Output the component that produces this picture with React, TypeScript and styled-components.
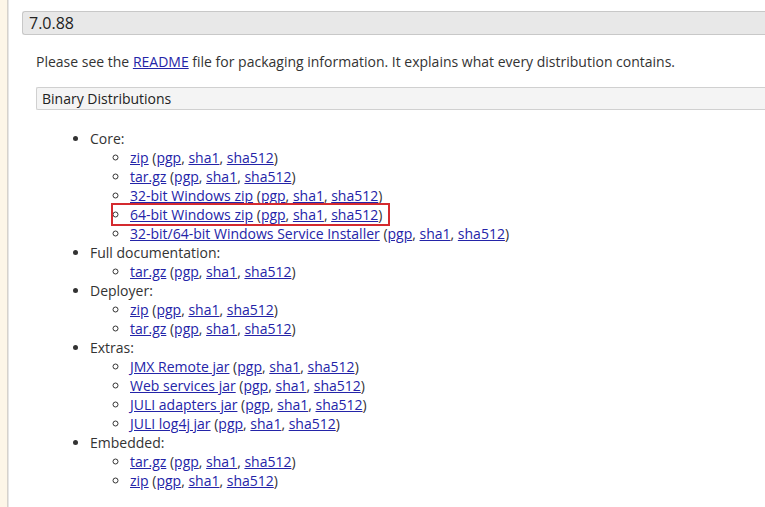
import React from "react";
import styled, { createGlobalStyle } from "styled-components";

const Global = createGlobalStyle`
  html, body { margin: 0; padding: 0; background: #fff; }
  body { font-family: "Open Sans", "DejaVu Sans", sans-serif; font-size: 14px; color: #333; }
`;

const Page = styled.div`
  display: flex;
  min-height: 507px;
  overflow: hidden;
`;

const Side = styled.div`
  width: 7px;
  flex: none;
  background: #fdf6e8;
  border-right: 1px solid #d6d2cc;
  box-shadow: 1px 0 0 #e6e6e6;
`;

const Main = styled.div`
  flex: 1;
  padding: 11px 0 0 14px;
  min-width: 0;
`;

const SectionHead = styled.h3`
  margin: 0;
  height: 22px;
  line-height: 22px;
  padding-left: 6px;
  font-size: 16px;
  font-weight: normal;
  color: #222;
  background: #e8e8e8;
  border: 1px solid #c8c8c8;
  border-right: none;
  border-radius: 3px 0 0 3px;
`;

const Body = styled.div`
  padding-left: 14px;
`;

const Para = styled.p`
  margin: 17px 0 0;
  line-height: 19px;
`;

const SubHead = styled.h4`
  margin: 16px 0 0;
  height: 21px;
  line-height: 22px;
  padding-left: 5px;
  font-size: 14px;
  font-weight: normal;
  color: #222;
  background: #f4f4f4;
  border: 1px solid #d0d0d0;
  border-right: none;
  border-radius: 2px 0 0 2px;
`;

const Outer = styled.ul`
  margin: 19px 0 0;
  padding-left: 54px;
  list-style: disc;
  line-height: 19px;
`;

const Inner = styled.ul`
  margin: 0;
  padding-left: 40px;
  list-style: circle;
`;

const Item = styled.li<{ $boxed?: boolean }>`
  position: relative;
  &::after {
    content: "";
    display: ${(p) => (p.$boxed ? "block" : "none")};
    position: absolute;
    left: -19px;
    top: -2px;
    width: 279px;
    height: 23px;
    border: 2px solid #d42a2f;
    box-sizing: border-box;
    pointer-events: none;
  }
`;

const A = styled.a`
  color: #2424a8;
  text-decoration: underline;
`;

type Entry = { label: string; boxed?: boolean };
const groups: { title: string; items: Entry[] }[] = [
  {
    title: "Core:",
    items: [
      { label: "zip" },
      { label: "tar.gz" },
      { label: "32-bit Windows zip" },
      { label: "64-bit Windows zip", boxed: true },
      { label: "32-bit/64-bit Windows Service Installer" },
    ],
  },
  { title: "Full documentation:", items: [{ label: "tar.gz" }] },
  { title: "Deployer:", items: [{ label: "zip" }, { label: "tar.gz" }] },
  {
    title: "Extras:",
    items: [
      { label: "JMX Remote jar" },
      { label: "Web services jar" },
      { label: "JULI adapters jar" },
      { label: "JULI log4j jar" },
    ],
  },
  { title: "Embedded:", items: [{ label: "tar.gz" }, { label: "zip" }] },
];

export default function App() {
  return (
    <>
      <Global />
      <Page>
        <Side />
        <Main>
          <SectionHead>7.0.88</SectionHead>
          <Body>
            <Para>
              Please see the <A href="#">README</A> file for packaging information. It explains what every distribution contains.
            </Para>
            <SubHead>Binary Distributions</SubHead>
            <Outer>
              {groups.map((g) => (
                <li key={g.title}>
                  {g.title}
                  <Inner>
                    {g.items.map((it, i) => (
                      <Item key={i} $boxed={it.boxed}>
                        <A href="#">{it.label}</A> (<A href="#">pgp</A>, <A href="#">sha1</A>, <A href="#">sha512</A>)
                      </Item>
                    ))}
                  </Inner>
                </li>
              ))}
            </Outer>
          </Body>
        </Main>
      </Page>
    </>
  );
}
